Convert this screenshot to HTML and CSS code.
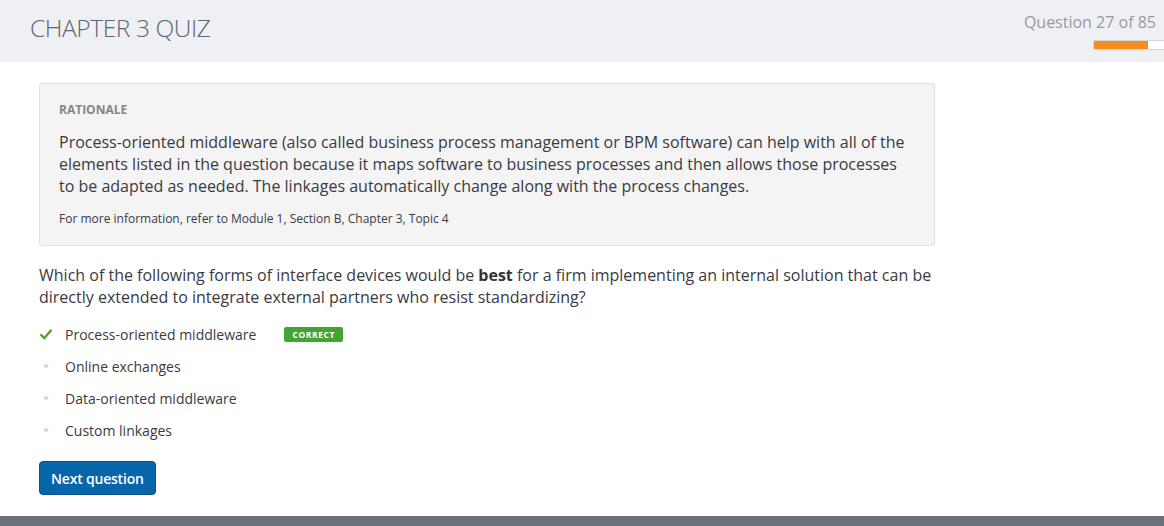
FILE: index.html
```html
<!DOCTYPE html>
<html lang="en">
<head>
<meta charset="utf-8">
<title>Chapter 3 Quiz</title>
<link rel="stylesheet" href="styles.css">
</head>
<body>
<header class="topbar">
  <h1 class="title">CHAPTER 3 QUIZ</h1>
  <div class="progress-block">
    <div class="counter">Question 27 of 85</div>
    <div class="progress"><div class="progress-fill" style="width:54px"></div></div>
  </div>
</header>
<main class="content">
  <section class="rationale">
    <div class="rationale-label">RATIONALE</div>
    <p class="rationale-text">Process-oriented middleware (also called business process management or BPM software) can help with all of the elements listed in the question because it maps software to business processes and then allows those processes to be adapted as needed. The linkages automatically change along with the process changes.</p>
    <p class="rationale-ref">For more information, refer to Module 1, Section B, Chapter 3, Topic 4</p>
  </section>
  <p class="question">Which of the following forms of interface devices would be <b>best</b> for a firm implementing an internal solution that can be directly extended to integrate external partners who resist standardizing?</p>
  <ul class="options">
    <li class="option">
      <span class="opt-icon"><svg width="12" height="11" viewBox="0 0 12 11"><path d="M1.2 6 L4.3 9.3 L10.8 1.5" fill="none" stroke="#5c9e2e" stroke-width="2.4" stroke-linecap="round" stroke-linejoin="round"/></svg></span>
      <span class="opt-text">Process-oriented middleware</span>
      <span class="badge">CORRECT</span>
    </li>
    <li class="option"><span class="opt-icon"><span class="diamond"></span></span><span class="opt-text">Online exchanges</span></li>
    <li class="option"><span class="opt-icon"><span class="diamond"></span></span><span class="opt-text">Data-oriented middleware</span></li>
    <li class="option"><span class="opt-icon"><span class="diamond"></span></span><span class="opt-text">Custom linkages</span></li>
  </ul>
  <button class="next-btn" type="button">Next question</button>
</main>
<footer class="footer"></footer>
</body>
</html>
```
FILE: styles.css
```css
html, body {
  margin: 0;
  padding: 0;
  overflow: hidden;
}
body {
  font-family: "Open Sans", "DejaVu Sans", sans-serif;
  color: #3a3a42;
  background: #ffffff;
  height: 526px;
}
.topbar {
  height: 62px;
  background: #eff0f4;
  display: flex;
  justify-content: space-between;
  align-items: flex-start;
}
.title {
  margin: 0;
  padding: 13px 0 0 30px;
  font-size: 24.5px;
  line-height: 30px;
  font-weight: 300;
  color: #5d6570;
  letter-spacing: -0.4px;
}
.progress-block {
  display: flex;
  flex-direction: column;
  align-items: flex-end;
  padding: 12px 8px 0 0;
}
.counter {
  font-size: 16px;
  line-height: 20px;
  color: #9a9a9a;
}
.progress {
  margin-top: 8px;
  margin-right: -8px;
  width: 70px;
  height: 8px;
  background: #ffffff;
  border: 1px solid #d6d6d6;
  border-right: none;
  border-radius: 2px 0 0 2px;
  overflow: hidden;
}
.progress-fill {
  height: 100%;
  background: #f58d1f;
}
.content {
  padding-left: 39px;
  width: 896px;
}
.rationale {
  margin-top: 21px;
  background: #f4f4f4;
  border: 1px solid #e1e1e1;
  border-radius: 3px;
  padding: 18px 19px 18px 19px;
}
.rationale-label {
  font-size: 12px;
  line-height: 16px;
  font-weight: 700;
  color: #858585;
}
.rationale-text {
  margin: 13px 0 0 0;
  font-size: 16px;
  line-height: 22px;
  color: #3a3a42;
}
.rationale-ref {
  margin: 14px 0 0 0;
  font-size: 12px;
  line-height: 16px;
  color: #3a3a42;
}
.question {
  margin: 18px 0 0 0;
  font-size: 16px;
  line-height: 22px;
  color: #3a3a42;
}
.question b {
  font-weight: 700;
  color: #333333;
}
.options {
  list-style: none;
  margin: 10px 0 0 0;
  padding: 0;
}
.option {
  height: 32px;
  display: flex;
  align-items: center;
  font-size: 14px;
}
.opt-icon {
  width: 26px;
  display: flex;
  align-items: center;
  justify-content: flex-start;
  padding-left: 1px;
  box-sizing: border-box;
}
.diamond {
  display: block;
  width: 4px;
  height: 4px;
  margin-left: 4px;
  background: #d8d8d8;
  transform: rotate(45deg);
}
.opt-text {
  color: #3a3a42;
}
.badge {
  margin-left: 28px;
  background: #41a433;
  color: #ffffff;
  font-size: 8.5px;
  font-weight: 700;
  letter-spacing: 0.6px;
  line-height: 15px;
  height: 15px;
  padding: 0 8px 0 8px;
  border-radius: 2px;
}
.next-btn {
  margin-top: 15px;
  height: 34px;
  padding: 0 11px;
  background: #0765a9;
  border: 1px solid #05528c;
  border-radius: 4px;
  color: #ffffff;
  font-family: "Open Sans", "DejaVu Sans", sans-serif;
  font-size: 14px;
  font-weight: 600;
  letter-spacing: -0.2px;
  cursor: pointer;
  display: block;
}
.footer {
  margin-top: 21px;
  height: 10px;
  background: #6a737b;
}
```
